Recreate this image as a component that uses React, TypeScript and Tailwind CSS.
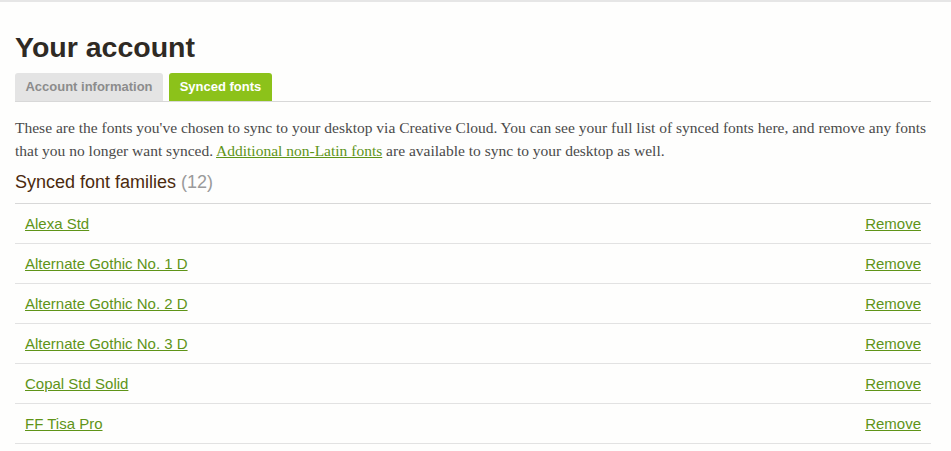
import React from "react";

const fonts = [
  "Alexa Std",
  "Alternate Gothic No. 1 D",
  "Alternate Gothic No. 2 D",
  "Alternate Gothic No. 3 D",
  "Copal Std Solid",
  "FF Tisa Pro",
];

export default function App() {
  return (
    <div className="w-[951px] h-[451px] overflow-hidden bg-[#fefefd] border-t-2 border-[#e6e6e6]" style={{ fontFamily: '"Liberation Sans", Arial, sans-serif' }}>
      <div className="pl-[15px] pr-[20px] pt-[28px]">
        <h1 className="text-[28.5px] leading-[34px] font-bold text-[#2f2a24]">Your account</h1>
        <div className="mt-[9px] flex items-end gap-[6px] border-b border-[#d8d8d8]">
          <div className="h-[28px] w-[148px] flex items-center justify-center bg-[#e4e4e4] rounded-t-[3px] text-[13px] font-bold text-[#8c8c8c]">
            Account information
          </div>
          <div className="h-[28px] w-[103px] flex items-center justify-center bg-[#8cc21a] rounded-t-[3px] text-[13px] font-bold text-white">
            Synced fonts
          </div>
        </div>
        <p className="mt-[14px] text-[15.5px] leading-[23px] text-[#4a4a4a]" style={{ fontFamily: '"Liberation Serif", Georgia, serif' }}>
          These are the fonts you've chosen to sync to your desktop via Creative Cloud. You can see your full list of synced fonts here, and remove any fonts that you no longer want synced.{" "}
          <a href="#" className="underline text-[#5f9418]">Additional non-Latin fonts</a> are available to sync to your desktop as well.
        </p>
        <h2 className="mt-[8px] text-[18px] leading-[24px] text-[#4b2a0e]">
          Synced font families <span className="text-[#9a9a9a]">(12)</span>
        </h2>
        <ul className="mt-[9px] border-t border-[#d8d8d8]">
          {fonts.map((f) => (
            <li key={f} className="h-[40px] flex items-center justify-between px-[10px] pt-[2px] border-b border-[#e2e2e2] text-[15px]">
              <a href="#" className="underline text-[#5f9418]">{f}</a>
              <a href="#" className="underline text-[#5f9418]">Remove</a>
            </li>
          ))}
        </ul>
      </div>
    </div>
  );
}
